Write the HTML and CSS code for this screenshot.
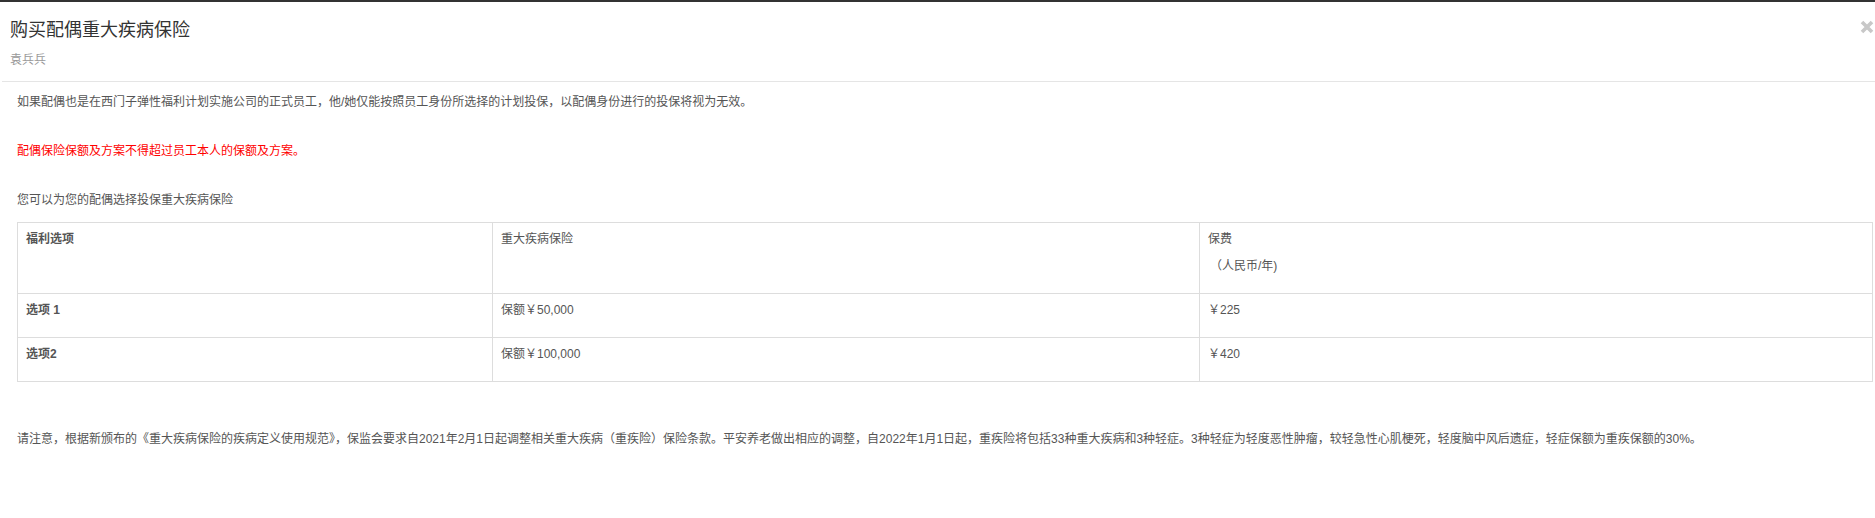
FILE: index.html
```html
<!DOCTYPE html>
<html lang="zh-CN">
<head>
<meta charset="utf-8">
<title>购买配偶重大疾病保险</title>
<link rel="stylesheet" href="styles.css">
</head>
<body>
<div class="modal">
  <div class="modal-header">
    <h1 class="title">购买配偶重大疾病保险</h1>
    <div class="subtitle">袁兵兵</div>
    <button class="close" aria-label="关闭">
      <svg width="14" height="14" viewBox="0 0 14 14"><path d="M2 2 L12 12 M12 2 L2 12" stroke="#c8c8c8" stroke-width="3.6" stroke-linecap="butt"/></svg>
    </button>
  </div>
  <div class="modal-body">
    <p class="para">如果配偶也是在西门子弹性福利计划实施公司的正式员工，他/她仅能按照员工身份所选择的计划投保，以配偶身份进行的投保将视为无效。</p>
    <p class="para warn">配偶保险保额及方案不得超过员工本人的保额及方案。</p>
    <p class="para">您可以为您的配偶选择投保重大疾病保险</p>
    <table class="plan-table">
      <colgroup>
        <col class="c1"><col class="c2"><col class="c3">
      </colgroup>
      <tr>
        <td class="strong">福利选项</td>
        <td>重大疾病保险</td>
        <td><div>保费</div><div class="sub">（人民币/年)</div></td>
      </tr>
      <tr>
        <td class="strong">选项 1</td>
        <td>保额￥50,000</td>
        <td>￥225</td>
      </tr>
      <tr>
        <td class="strong">选项2</td>
        <td>保额￥100,000</td>
        <td>￥420</td>
      </tr>
    </table>
  </div>
  <p class="note">请注意，根据新颁布的《重大疾病保险的疾病定义使用规范》，保监会要求自2021年2月1日起调整相关重大疾病（重疾险）保险条款。平安养老做出相应的调整，自2022年1月1日起，重疾险将包括33种重大疾病和3种轻症。3种轻症为轻度恶性肿瘤，较轻急性心肌梗死，轻度脑中风后遗症，轻症保额为重疾保额的30%。</p>
</div>
</body>
</html>
```

FILE: styles.css
```css
html, body {
  margin: 0;
  padding: 0;
  background: #fff;
}
body {
  font-family: "Liberation Sans", "Noto Sans CJK SC", sans-serif;
  font-size: 12px;
  color: #555;
}
.modal {
  border-top: 2px solid #333;
}
.modal-header {
  position: relative;
  margin-left: 2px;
  padding: 16px 0 11px 8px;
  border-bottom: 1px solid #e5e5e5;
}
.title {
  margin: 0;
  font-size: 18px;
  line-height: 24px;
  font-weight: normal;
  color: #333;
}
.subtitle {
  margin-top: 8px;
  font-size: 12px;
  line-height: 20px;
  color: #999;
}
.close {
  position: absolute;
  top: 18px;
  right: 1px;
  width: 14px;
  height: 14px;
  padding: 0;
  border: 0;
  background: none;
  display: flex;
}
.modal-body {
  padding: 10px 2px 0 17px;
}
.para {
  margin: 0 0 29px 0;
  line-height: 20px;
}
.para:nth-of-type(3) {
  margin-bottom: 12px;
}
.warn {
  color: #ff0000;
}
.plan-table {
  width: 100%;
  border-collapse: collapse;
  table-layout: fixed;
}
.c1 { width: 475px; }
.c2 { width: 707px; }
.plan-table td {
  border: 1px solid #ddd;
  padding: 6px 8px 17px 8px;
  line-height: 20px;
  vertical-align: top;
  color: #555;
}
.plan-table td.strong {
  font-weight: bold;
}
.plan-table .sub {
  margin-top: 7px;
  padding-left: 2px;
}
.note {
  margin: 47px 0 0 17px;
  line-height: 20px;
}
```
